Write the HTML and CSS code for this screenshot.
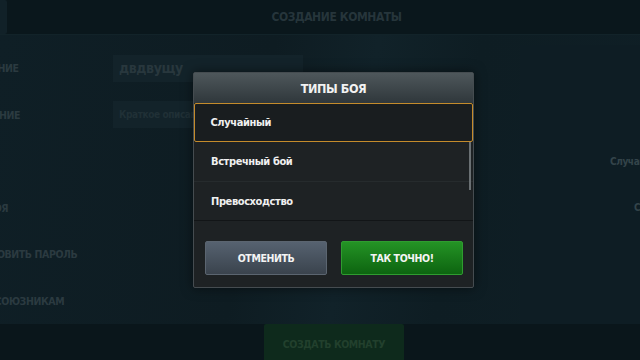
FILE: index.html
```html
<!DOCTYPE html>
<html lang="ru">
  <head>
    <meta charset="UTF-8" />
    <meta name="viewport" content="width=device-width, initial-scale=1.0" />
    <title>Создание комнаты</title>
    <link rel="stylesheet" href="styles.css">
  </head>
  <body>
    <header class="TopBar">
      <div class="BackTab"></div>
      <h1 class="PageTitle">СОЗДАНИЕ КОМНАТЫ</h1>
    </header>

    <main class="Room">
      <div class="Form">
        <div class="Row">
          <span class="Label">НАЗВАНИЕ</span>
          <div class="Field">двдвущу</div>
        </div>
        <div class="Row">
          <span class="Label">ОПИСАНИЕ</span>
          <div class="Field Hint">Краткое описание</div>
        </div>
        <div class="Row">
          <span class="Label"></span>
        </div>
        <div class="Row">
          <span class="Label">ТИП БОЯ</span>
        </div>
        <div class="Row">
          <span class="Label">УСТАНОВИТЬ ПАРОЛЬ</span>
        </div>
        <div class="Row">
          <span class="Label Wide">ТОЛЬКО СОЮЗНИКАМ</span>
        </div>
      </div>
      <div class="Side">
        <div class="SideRow"></div>
        <div class="SideRow"></div>
        <div class="SideRow"><span class="SideText">Случайный</span></div>
        <div class="SideRow Far"><span class="SideText">Случайно</span></div>
      </div>
    </main>

    <footer class="BottomBar">
      <button class="CreateBtn">СОЗДАТЬ КОМНАТУ</button>
    </footer>

    <!-- modal: battle type picker -->
    <div class="Overlay">
      <div class="Dialog">
        <div class="DialogHead">ТИПЫ БОЯ</div>
        <ul class="Modes">
          <li class="Mode Picked">Случайный</li>
          <li class="Mode">Встречный бой</li>
          <li class="Mode">Превосходство</li>
          <div class="Scroll"></div>
        </ul>
        <div class="Actions">
          <button class="Btn Cancel">ОТМЕНИТЬ</button>
          <button class="Btn Ok">ТАК ТОЧНО!</button>
        </div>
      </div>
    </div>
  </body>
</html>
```

FILE: styles.css
```css
* {
  box-sizing: border-box;
}
body {
  margin: 0;
  width: 640px;
  height: 360px;
  overflow: hidden;
  display: flex;
  flex-direction: column;
  background-color: #0c1a20;
  font-family: "DejaVu Sans Condensed", "Liberation Sans Narrow", "Roboto", sans-serif;
  font-stretch: condensed;
  font-weight: bold;
  letter-spacing: -0.4px;
  position: relative;
}
.TopBar {
  height: 44px;
  display: flex;
  align-items: center;
  background-color: #0a171c;
  border-bottom: 1px solid #122329;
}
.BackTab {
  width: 7px;
  height: 34px;
  background-color: #112128;
  border-radius: 0 2px 2px 0;
}
.PageTitle {
  flex: 1;
  margin: 0;
  padding-left: 26px;
  text-align: center;
  font-size: 12px;
  color: #26353b;
}
.Room {
  flex: 1;
  display: flex;
  justify-content: space-between;
  background: linear-gradient(100deg, #0f1f26 0%, #0e1c22 40%, #112229 55%, #0e1d23 70%, #0f1f26 100%);
  padding-top: 10px;
}
.Form {
  display: flex;
  flex-direction: column;
  margin-left: -37px;
}
.Row {
  height: 46.5px;
  display: flex;
  align-items: center;
}
.Label {
  width: 150px;
  font-size: 10.5px;
  color: #2b3a40;
}
.Wide {
  margin-left: -14px;
}
.Field {
  width: 190px;
  height: 27px;
  display: flex;
  align-items: center;
  padding-left: 6px;
  background-color: #13232a;
  font-size: 14px;
  color: #28373d;
}
.Hint {
  font-size: 10px;
  color: #203036;
}
.Side {
  width: 120px;
  display: flex;
  flex-direction: column;
  background-color: #0e1d24;
}
.SideRow {
  height: 46.5px;
  display: flex;
  align-items: center;
  padding-left: 90px;
}
.Far {
  padding-left: 114px;
}
.SideText {
  font-size: 10px;
  color: #34444a;
  white-space: nowrap;
}
.BottomBar {
  height: 53px;
  display: flex;
  justify-content: center;
  align-items: center;
  background-color: #0a161b;
}
.CreateBtn {
  width: 140px;
  height: 39px;
  margin-left: 28px;
  border: none;
  border-radius: 2px;
  background-color: #0e2a1c;
  font-family: inherit;
  font-weight: bold;
  font-size: 10.5px;
  letter-spacing: -0.4px;
  color: #22402d;
}
.Overlay {
  position: absolute;
  top: 0;
  left: 0;
  right: 0;
  bottom: 0;
  display: flex;
  justify-content: center;
  padding-top: 72px;
}
.Dialog {
  width: 281px;
  height: 216px;
  margin-left: 27px;
  background-color: #1e2224;
  border: 1px solid #454c50;
  border-radius: 2px;
  display: flex;
  flex-direction: column;
  box-shadow: 0 0 12px rgba(0, 0, 0, 0.5);
}
.DialogHead {
  height: 30px;
  display: flex;
  justify-content: center;
  align-items: center;
  background: linear-gradient(#4e575b, #2f373b);
  font-size: 12.5px;
  color: #f2f2f2;
}
.Modes {
  list-style-type: none;
  margin: 0;
  padding: 0;
  position: relative;
  border-bottom: 1px solid #121517;
}
.Mode {
  height: 39px;
  display: flex;
  align-items: center;
  padding-left: 17px;
  font-size: 11px;
  color: #f0f0f0;
  border-top: 1px solid #262b2d;
}
.Picked {
  border: 1.5px solid #c48b2b;
  border-radius: 2px;
  background-color: #191d1f;
  padding-left: 15.5px;
}
.Mode.Picked + .Mode {
  border-top: none;
}
.Scroll {
  position: absolute;
  right: 2px;
  top: 39px;
  width: 2px;
  height: 48px;
  background-color: #6a7073;
}
.Actions {
  flex: 1;
  display: flex;
  justify-content: space-between;
  padding: 20px 10px 0 11px;
}
.Btn {
  width: 122px;
  height: 34px;
  border-radius: 2px;
  font-family: inherit;
  font-weight: bold;
  font-size: 10.5px;
  letter-spacing: -0.4px;
  color: #f4f4f4;
}
.Cancel {
  background: linear-gradient(#566270, #3a434d);
  border: 1px solid #5b6570;
}
.Ok {
  background: linear-gradient(#249325, #0d6410);
  border: 1px solid #2f9c30;
}
```
